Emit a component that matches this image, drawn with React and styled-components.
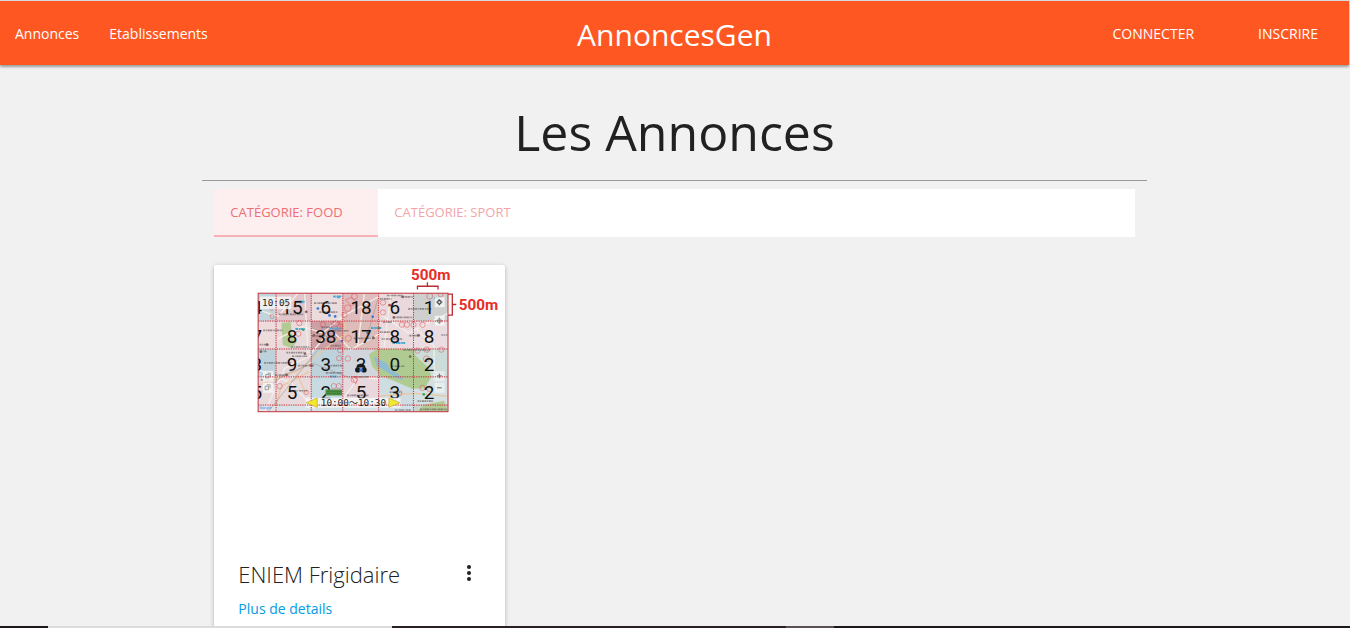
import React from "react";
import styled, { createGlobalStyle } from "styled-components";

const GlobalStyle = createGlobalStyle`
  *, *::before, *::after { box-sizing: border-box; }
  body {
    margin: 0;
    background: #f1f1f1;
    color: #212121;
    font-family: "Segoe UI", "Open Sans", "Noto Sans", sans-serif;
    font-size: 14px;
  }
  a { text-decoration: none; }
`;

const Page = styled.div`
  height: 100vh;
  display: flex;
  flex-direction: column;
  overflow: hidden;
  border-top: 1px solid #d8d8d8;
`;

const NavBar = styled.nav`
  flex: none;
  position: relative;
  display: grid;
  grid-template-columns: 1fr auto 1fr;
  align-items: center;
  height: 64px;
  margin-right: 1px;
  background: #ff5722;
  box-shadow: 0 2px 2px 0 rgba(0, 0, 0, 0.24), 0 1px 4px 0 rgba(0, 0, 0, 0.2);
`;

const NavGroup = styled.div`
  display: flex;
  justify-content: ${(p) => (p.$end ? "flex-end" : "flex-start")};
  gap: ${(p) => (p.$end ? "34px" : "0")};
  padding-right: ${(p) => (p.$end ? "16px" : "0")};
`;

const NavLink = styled.a`
  padding: 0 15px 2px;
  color: #fff;
  font-size: 14px;
  line-height: 62px;
`;

const Brand = styled.a`
  color: #fff;
  font-size: 30px;
  line-height: 68px;
`;

const Main = styled.main`
  flex: 1;
  min-height: 0;
  padding-right: 1px;
  overflow: hidden;
`;

const Container = styled.div`
  width: 70%;
  margin: 0 auto;
`;

const Heading = styled.h1`
  margin: 0;
  padding: 35px 0 16px;
  border-bottom: 1px solid #999;
  font-size: 50px;
  font-weight: 400;
  line-height: 64px;
  text-align: center;
`;

const Columns = styled.div`
  padding: 8px 12px 0;
`;

const Tabs = styled.div`
  display: flex;
  height: 48px;
  background: #fff;
`;

const Tab = styled.button`
  height: 48px;
  padding: 0 16px;
  min-width: ${(p) => (p.$active ? "164px" : "0")};
  border: 0;
  border-bottom: 2px solid ${(p) => (p.$active ? "#f6b2b5" : "transparent")};
  background: ${(p) => (p.$active ? "#fdeff0" : "transparent")};
  color: ${(p) => (p.$active ? "#ee6e73" : "#f3a5a9")};
  font: inherit;
  font-size: 13px;
  text-align: left;
  text-transform: uppercase;
`;

const Cards = styled.div`
  display: grid;
  grid-template-columns: repeat(3, 1fr);
  gap: 24px;
  padding-top: 28px;
`;

const Card = styled.article`
  background: #fff;
  border-radius: 2px;
  box-shadow: 0 2px 2px 0 rgba(0, 0, 0, 0.14), 0 1px 5px 0 rgba(0, 0, 0, 0.2);
`;

const CardImage = styled.div`
  min-height: 269px;
  svg { display: block; width: 100%; height: auto; }
`;

const CardContent = styled.div`
  padding: 24px;
`;

const CardTitle = styled.div`
  display: flex;
  justify-content: space-between;
  align-items: flex-start;
  height: 32px;
`;

const TitleText = styled.h2`
  margin: 0;
  font-size: 22px;
  font-weight: 300;
  line-height: 32px;
`;

const MoreButton = styled.button`
  width: 24px;
  height: 30px;
  padding: 0;
  border: 0;
  background: none;
  color: #212121;
  svg { display: block; }
`;

const DetailsLink = styled.a`
  display: block;
  padding-top: 8px;
  color: #039be5;
  font-size: 14px;
  line-height: 22px;
`;

const TaskStrip = styled.footer`
  flex: none;
  display: flex;
  height: 2px;
  background: #1d181b;
`;

const TaskPart = styled.span`
  flex: 0 0 ${(p) => p.$size}px;
  background: ${(p) => p.$color};
`;

const COLS = [160, 214, 320, 415, 523, 628, 732];
const ROWS = [100, 184, 268, 352, 437, 457];
const TINTS = [
  ["#c3d5dc", "#e2c6cb", "#eadcdd", "#dfbcbd", "#e9d9dc", "#cdd0cf"],
  ["#eedcdc", "#e9dadd", "#cda0a7", "#dcbdb9", "#ecdbdf", "#ebdde1"],
  ["#bfd3dc", "#e7d9dd", "#bfd3dc", "#d3d6dd", "#b6cb9b", "#ccdcd9"],
  ["#e8d9dc", "#e8dadd", "#c9dbe3", "#e8d8dc", "#cfdde1", "#d4e0e1"],
  ["#dfe3e6", "#d8e3e9", "#d1e1e7", "#d9e1e8", "#d3e2e9", "#c9d5cd"],
];
const CENTERS = [156, 262, 364, 470, 572, 675];
const BASES = [164, 249, 334, 418];
const COUNTS = [
  ["4", "15", "6", "18", "6", "1"],
  ["7", "8", "38", "17", "8", "8"],
  ["3", "9", "3", "3", "0", "2"],
  ["5", "5", "2", "5", "3", "2"],
];
const RINGS = [
  [202, 170, 6], [200, 145, 6], [450, 110, 9], [430, 145, 10], [420, 165, 8], [536, 128, 8],
  [536, 158, 8], [677, 109, 9], [284, 190, 8], [281, 222, 8], [394, 192, 9], [407, 200, 8],
  [432, 236, 9], [404, 296, 8], [430, 297, 8], [407, 272, 8], [225, 380, 8], [305, 399, 7],
  [388, 380, 8], [403, 380, 8], [449, 360, 9], [640, 273, 8], [668, 270, 8], [667, 298, 9],
  [655, 385, 8], [676, 388, 8], [585, 401, 8], [593, 195, 8], [608, 195, 8], [628, 195, 8],
  [655, 195, 8], [712, 270, 8], [355, 194, 8], [710, 104, 7],
];
const LABELS = [
  [548, 107, 46], [526, 117, 36], [590, 111, 36], [328, 130, 70], [222, 164, 74], [612, 147, 72],
  [566, 173, 58], [175, 212, 58], [260, 262, 56], [322, 229, 44], [384, 213, 50], [448, 236, 64],
  [526, 217, 38], [532, 238, 62], [615, 228, 34], [712, 226, 18], [164, 255, 28], [245, 279, 52],
  [262, 290, 46], [178, 310, 80], [280, 318, 48], [372, 318, 44], [364, 340, 50], [450, 352, 44],
  [598, 271, 80], [168, 361, 32], [270, 394, 38], [428, 408, 64], [560, 320, 40], [556, 398, 36],
  [572, 452, 48], [648, 450, 80], [210, 347, 42], [350, 203, 34], [344, 157, 56], [640, 425, 46],
  [165, 275, 20], [536, 187, 26], [378, 258, 34],
];
const PINS = [
  [290, 127, "#51a9dc"], [402, 112, "#51a9dc"], [340, 146, "#3478d7"], [375, 167, "#3478d7"],
  [392, 170, "#3478d7"], [505, 171, "#3478d7"], [412, 244, "#3478d7"], [490, 220, "#3478d7"],
  [556, 136, "#a14b4e"], [596, 111, "#80655f"], [305, 156, "#80655f"], [328, 227, "#80655f"],
  [643, 227, "#80655f"], [507, 234, "#80655f"], [187, 255, "#80655f"], [301, 282, "#80655f"],
  [168, 276, "#80655f"], [618, 291, "#80655f"], [320, 318, "#a14b4e"], [569, 173, "#80655f"],
  [296, 210, "#35a56a"], [524, 205, "#35a56a"], [659, 405, "#35a56a"], [245, 346, "#80655f"],
];

function DensityMap() {
  return (
    <svg viewBox="27 15 876 450" role="img" aria-label="Carte de densité par zones de 500 m">
      <defs>
        <clipPath id="frame"><rect x="160" y="100" width="572" height="357" /></clipPath>
      </defs>
      <g clipPath="url(#frame)">
        {TINTS.map((row, r) =>
          row.map((fill, c) => (
            <rect key={`${r}-${c}`} x={COLS[c]} y={ROWS[r]} width={COLS[c + 1] - COLS[c]} height={ROWS[r + 1] - ROWS[r]} fill={fill} />
          ))
        )}
        <path d="M494 284l26-16h100l20 26 32 30 10 28-20 34-38 2-56-24-40-16-24-28z" fill="#b0cb91" />
        <path d="M230 190l28-4 4 40 14 20-14 20-28-10zM660 436l60-12 12 32h-92z" fill="#b4ca95" />
        <path d="M508 290l40 22 10 18 28 16 14 16-22-6-32-20-28-16z" fill="#8dbdd3" />
        <g fill="none" stroke="#f3eee8" strokeWidth="4">
          <path d="M160 150l60 20 60-70M214 240l80-40 60 20 60-50 110-60M180 457l60-130 80-40M320 280l60-70 60 60 90-50M415 420l50-70 60 10M523 160l90 60 120-60M630 200l60 60v100M160 330l100 40 70 80M300 100l10 180M560 100l-20 160M480 100l-20 160" />
        </g>
        <g fill="none" stroke="#e8c7a2" strokeWidth="4">
          <path d="M160 378l120-44 80-66 70-50M214 440l16-60 84-44M276 342l28 60M415 166l14 90M520 410l110-8 102 8" />
        </g>
        <path d="M160 405l80-60 86-34 110 44M488 230l32-110M340 270l-150 187" fill="none" stroke="#a79c9d" strokeWidth="2" />
        <g fill="none" stroke="#dd5358" strokeWidth="2" opacity="0.8">
          {RINGS.map(([x, y, r], i) => <circle key={i} cx={x} cy={y} r={r} />)}
          <path d="M380 190l24-5 6 20-24 8zM423 120l20-8 14 16-16 10zM440 350l14 24 6-16z" />
        </g>
        <g stroke="#5d565a" strokeWidth="5" strokeDasharray="6 2 3 2 7 1" opacity="0.6">
          {LABELS.map(([x, y, w], i) => <line key={i} x1={x} y1={y} x2={x + w} y2={y} />)}
        </g>
        <g stroke="#48a9d7" strokeWidth="6" strokeDasharray="8 2 5 1">
          <path d="M386 110h26M276 126h24M272 208h28M376 206h34M500 205h32M565 250h38M376 351h20M690 115h14" />
        </g>
        {PINS.map(([x, y, fill], i) => <circle key={i} cx={x} cy={y} r="4" fill={fill} />)}
        <g fontFamily="Roboto, sans-serif" fontSize="57" textAnchor="middle" fill="#111">
          {COUNTS.map((row, r) =>
            row.map((n, c) => <text key={`${r}-${c}`} x={CENTERS[c]} y={BASES[r]}>{n}</text>)
          )}
        </g>
        <g fill="#17191c">
          <path d="M455 324l5-10h18l5 10z" />
          <circle cx="460" cy="331" r="8" />
          <circle cx="479" cy="331" r="8" />
        </g>
        <rect x="465" y="327" width="10" height="9" fill="#3478d7" />
        <rect x="363" y="390" width="50" height="18" fill="#4e9043" />
        <path d="M368 396h40M368 402h40" stroke="#31652e" strokeWidth="2" strokeDasharray="5 2" />
        <g fill="#f6f6f6" fillOpacity="0.85">
          <rect x="166" y="110" width="94" height="38" />
          <rect x="692" y="112" width="30" height="30" />
          <rect x="692" y="168" width="30" height="30" />
          <rect x="692" y="335" width="30" height="30" fillOpacity="0.6" />
          <rect x="692" y="370" width="30" height="30" fillOpacity="0.6" />
          <rect x="174" y="334" width="32" height="32" />
          <rect x="174" y="370" width="32" height="30" />
          <rect x="303" y="415" width="286" height="30" />
        </g>
        <circle cx="706" cy="127" r="5" fill="none" stroke="#555" strokeWidth="4" />
        <path d="M706 118v4M706 132v4M697 127h4M711 127h4" stroke="#555" strokeWidth="4" />
        <g fill="none" stroke="#777" strokeWidth="2">
          <circle cx="706" cy="183" r="6" />
          <path d="M706 173v20M696 183h20M183 345h10v10h-10zM188 341h9v10M181 380h10v11h-10zM186 376h10v11" />
        </g>
        <path d="M706 342v14M699 349h14M699 385h14" stroke="#666" strokeWidth="3" />
        <g stroke="#c72c36" strokeWidth="3" strokeDasharray="4 3">
          {COLS.slice(1, 6).map((x) => <line key={x} x1={x} y1="100" x2={x} y2="457" />)}
          {ROWS.slice(1, 5).map((y) => <line key={y} x1="160" y1={y} x2="732" y2={y} />)}
        </g>
        <g fill="#1d1d1d" fontFamily="'DejaVu Sans Mono', 'Noto Sans CJK JP', monospace" fontSize="28">
          <text x="172" y="138">10:05</text>
          <text x="447" y="440" textAnchor="middle">10:00～10:30</text>
        </g>
        <path d="M338 416v28l-33-14zM554 416v28l33-14z" fill="#f5e92f" stroke="#bda92d" strokeWidth="2" />
        <text x="163" y="450" fontSize="12" fontFamily="Roboto, sans-serif" fill="#4c8cec">Google</text>
      </g>
      <rect x="160" y="100" width="572" height="357" fill="none" stroke="#bd2f38" strokeWidth="3" />
      <path d="M640 89V79h62v10M670 79V67M732 103h13v63h-13M745 134h12" fill="none" stroke="#b92e34" strokeWidth="4" />
      <g fill="#e82d25" fontFamily="Roboto, sans-serif" fontWeight="700" fontSize="46">
        <text x="680" y="59" textAnchor="middle">500m</text>
        <text x="824" y="151" textAnchor="middle">500m</text>
      </g>
    </svg>
  );
}

export default function App() {
  return (
    <>
      <GlobalStyle />
      <Page>
        <NavBar>
          <NavGroup>
            <NavLink href="#annonces">Annonces</NavLink>
            <NavLink href="#etablissements">Etablissements</NavLink>
          </NavGroup>
          <Brand href="#accueil">AnnoncesGen</Brand>
          <NavGroup $end>
            <NavLink href="#connecter">CONNECTER</NavLink>
            <NavLink href="#inscrire">INSCRIRE</NavLink>
          </NavGroup>
        </NavBar>
        <Main>
          <Container>
            <Heading>Les Annonces</Heading>
            <Columns>
              <Tabs role="tablist">
                <Tab role="tab" aria-selected="true" $active>Catégorie: Food</Tab>
                <Tab role="tab" aria-selected="false">Catégorie: Sport</Tab>
              </Tabs>
              <Cards>
                <Card>
                  <CardImage><DensityMap /></CardImage>
                  <CardContent>
                    <CardTitle>
                      <TitleText>ENIEM Frigidaire</TitleText>
                      <MoreButton aria-label="Plus d'options">
                        <svg width="24" height="24" viewBox="0 0 24 24" fill="currentColor">
                          <circle cx="12" cy="6" r="2" />
                          <circle cx="12" cy="12" r="2" />
                          <circle cx="12" cy="18" r="2" />
                        </svg>
                      </MoreButton>
                    </CardTitle>
                    <DetailsLink href="#details">Plus de details</DetailsLink>
                  </CardContent>
                </Card>
              </Cards>
            </Columns>
          </Container>
        </Main>
        <TaskStrip>
          <TaskPart $size={48} $color="#1d181b" />
          <TaskPart $size={344} $color="#dcdcdc" />
          <TaskPart $size={394} $color="#2a2022" />
          <TaskPart $size={48} $color="#5a5154" />
        </TaskStrip>
      </Page>
    </>
  );
}
